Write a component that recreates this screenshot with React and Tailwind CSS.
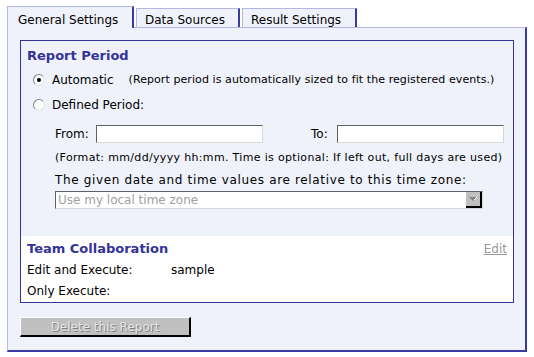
import React from 'react'

const font = { fontFamily: '"DejaVu Sans", Verdana, sans-serif' }

function Radio({ checked }) {
  return (
    <span className="relative flex h-[12px] w-[12px] items-center justify-center rounded-full border border-t-[#808080] border-l-[#808080] border-r-[#e0e0e0] border-b-[#e0e0e0] bg-white">
      {checked ? <span className="h-[4px] w-[4px] rounded-full bg-black" /> : null}
    </span>
  )
}

function Tab({ label, active }) {
  if (active) {
    return (
      <div className="relative z-10 -mb-px flex h-[22px] w-[127px] items-start border-t border-l border-r-2 border-[#b4b8e0] border-r-[#3a3aa6] bg-[#eff2fa] pl-[10px] pt-[4px] text-[12px] text-black">
        {label}
      </div>
    )
  }
  return (
    <div className="flex h-[19px] items-start border-t border-l border-r-2 border-[#b4b8e0] border-r-[#3a3aa6] bg-[#eff2fa] pl-[8px] pt-[2px] text-[12px] text-black">
      {label}
    </div>
  )
}

export default function App() {
  return (
    <div className="h-[357px] w-[534px] bg-white" style={font}>
      <div className="flex items-end gap-[2px] pl-[7px] pt-[6px]">
        <Tab label="General Settings" active />
        <div className="w-[104px]">
          <Tab label="Data Sources" />
        </div>
        <div className="w-[115px]">
          <Tab label="Result Settings" />
        </div>
      </div>

      <div className="ml-[7px] flex h-[325px] w-[520px] flex-col border-t border-l border-r-2 border-b-2 border-[#b4b8e0] border-r-[#3a3aa6] border-b-[#3a3aa6] bg-[#eff2fa] pl-[12px] pt-[12px]">
        <div className="w-[494px] border border-[#333399]">
          <div className="bg-[#eff2fa] pb-[26px] pl-[6px]">
            <div className="mt-[5px] flex h-[20px] items-center text-[13px] font-bold text-[#333399]">
              Report Period
            </div>
            <div className="mt-[4px] flex h-[20px] items-center pl-[6px] text-[12px] text-black">
              <Radio checked />
              <span className="ml-[7px]">Automatic</span>
              <span className="ml-[15px] text-[11px] tracking-[0.08px]">(Report period is automatically sized to fit the registered events.)</span>
            </div>
            <div className="mt-[5px] flex h-[20px] items-center pl-[6px] text-[12px] text-black">
              <Radio />
              <span className="ml-[7px]">Defined Period:</span>
            </div>
            <div className="mt-[9px] flex h-[20px] items-center pl-[28px] text-[12px] text-black">
              <span className="w-[41px]">From:</span>
              <span className="h-[18px] w-[167px] border border-t-[#606060] border-l-[#606060] border-r-[#d8d8d8] border-b-[#d8d8d8] bg-white" />
              <span className="ml-[48px] w-[26px]">To:</span>
              <span className="h-[18px] w-[167px] border border-t-[#606060] border-l-[#606060] border-r-[#d8d8d8] border-b-[#d8d8d8] bg-white" />
            </div>
            <div className="mt-[4px] flex h-[20px] items-center pl-[28px] text-[11px] tracking-[0.33px] text-black">
              (Format: mm/dd/yyyy hh:mm. Time is optional: If left out, full days are used)
            </div>
            <div className="mt-[2px] flex h-[20px] items-center pl-[28px] text-[12px] tracking-[0.65px] text-black">
              The given date and time values are relative to this time zone:
            </div>
            <div className="flex h-[20px] items-center pl-[28px]">
              <div className="flex h-[18px] w-[428px] items-center justify-between border border-t-[#606060] border-l-[#606060] border-r-[#d8d8d8] border-b-[#d8d8d8] bg-white">
                <span className="pl-[2px] text-[12px] text-[#a0a0a0]">Use my local time zone</span>
                <span className="flex h-[16px] w-[16px] items-center justify-center border-r-2 border-b-2 border-black bg-[#c0c0c0]">
                  <svg width="8" height="5" viewBox="0 0 8 5">
                    <path d="M0 0 H8 L4 4 Z" fill="#808080" />
                    <path d="M5 3 L8 0" stroke="#ffffff" strokeWidth="1" />
                  </svg>
                </span>
              </div>
            </div>
          </div>
          <div className="bg-white pb-[1px] pl-[6px] pr-[6px] pt-[3px]">
            <div className="flex h-[20px] items-center justify-between">
              <span className="text-[13px] font-bold text-[#333399]">Team Collaboration</span>
              <span className="text-[12px] text-[#999999] underline">Edit</span>
            </div>
            <div className="mt-px flex h-[20px] items-center text-[12px] text-black">
              <span className="w-[144px]">Edit and Execute:</span>
              <span>sample</span>
            </div>
            <div className="mt-px flex h-[20px] items-center text-[12px] text-black">Only Execute:</div>
          </div>
        </div>

        <button
          type="button"
          disabled
          className="mt-[14px] flex h-[20px] w-[171px] items-center justify-center border border-t-white border-l-white border-r-2 border-b-2 border-r-black border-b-black bg-[#c0c0c0] text-[12px] text-[#e4e4e4] [text-shadow:1px_1px_0_#808080]"
        >
          Delete this Report
        </button>
      </div>
    </div>
  )
}
